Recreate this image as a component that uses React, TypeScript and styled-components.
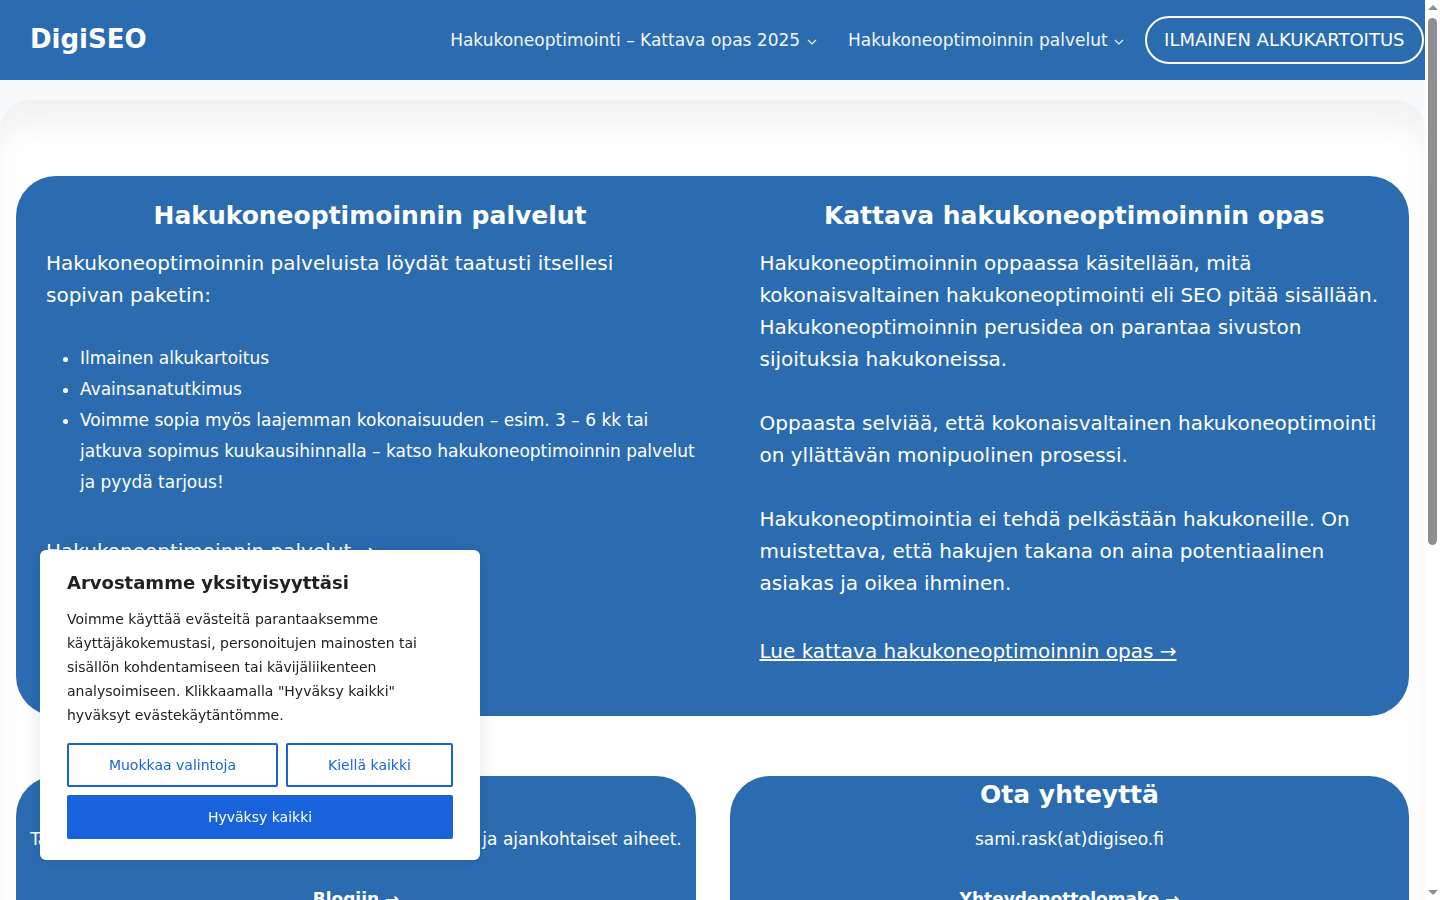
import React from 'react';
import styled, { createGlobalStyle } from 'styled-components';

const Global = createGlobalStyle`
  body {
    margin: 0 15px 0 0;
    background: #f7fafc;
    color: #fff;
    font-family: "DejaVu Sans", sans-serif;
  }
  a { color: inherit; }
`;

const Header = styled.header`
  height: 80px;
  background: #2b6cb0;
  display: flex;
  align-items: center;
  justify-content: space-between;
  padding-left: 30px;
`;

const Logo = styled.a`
  padding-bottom: 2px;
  font-size: 26px;
  font-weight: 700;
  color: #fff;
  text-decoration: none;
`;

const Nav = styled.nav`
  display: flex;
  align-items: center;
`;

const NavItem = styled.a<{ $gap: number }>`
  display: flex;
  align-items: center;
  gap: ${(p) => p.$gap}px;
  font-size: 17px;
  color: #f0f5fa;
  margin: 0 21px 0 10px;
`;

const Cta = styled.a`
  height: 48px;
  box-sizing: border-box;
  margin-right: 1px;
  padding: 0 17.5px 1px;
  display: flex;
  align-items: center;
  border: 2px solid #fff;
  border-radius: 24px;
  font-size: 18px;
  color: #fff;
`;

const Panel = styled.main`
  margin-top: 20px;
  padding: 76px 16px 40px;
  background: #fff;
  border-radius: 30px 30px 0 0;
  box-shadow: inset 0 30px 30px -5px rgba(0, 0, 0, 0.055);
`;

const BigCard = styled.section`
  height: 540px;
  box-sizing: border-box;
  background: #2b6cb0;
  border-radius: 40px;
  display: grid;
  grid-template-columns: 678px 1fr;
  column-gap: 35.5px;
  padding-top: 24px;
`;

const Column = styled.div<{ $right?: boolean }>`
  padding: ${(p) => (p.$right ? '0 20px 0 30px' : '0 0 0 30px')};
`;

const Title = styled.h2`
  margin: 0 0 15px;
  height: 32px;
  line-height: 32px;
  font-size: 25px;
  font-weight: 700;
  text-align: center;
  color: #fff;
`;

const Text = styled.p`
  margin: 0 0 32px;
  font-size: 20px;
  line-height: 32px;
  color: #fff;
`;

const List = styled.ul`
  margin: 0 -4px 33px 0;
  padding-left: 34px;
  font-size: 17px;
  line-height: 31px;
`;

const BigLink = styled.a`
  display: inline-block;
  margin-top: 4px;
  font-size: 20px;
  line-height: 32px;
  color: #fff;
  text-decoration: underline;
`;

const Row = styled.div`
  margin-top: 60px;
  display: grid;
  grid-template-columns: 680px 679px;
  gap: 34px;
`;

const SmallCard = styled.section`
  height: 190px;
  background: #2b6cb0;
  border-radius: 40px;
  text-align: center;
  color: #fff;
`;

const SmallTitle = styled.h3`
  margin: 0;
  padding-top: 2px;
  height: 32px;
  line-height: 34px;
  font-size: 25px;
  font-weight: 700;
`;

const SmallText = styled.p`
  margin: 14px 0 34px;
  line-height: 31px;
  font-size: 17px;
`;

const BoldLink = styled.a`
  font-size: 17px;
  font-weight: 700;
  color: #fff;
  text-decoration: underline;
`;

const Footer = styled.footer`
  padding: 24px 0 220px;
  text-align: center;
  font-size: 14px;
  color: #4a5568;
`;

const Cookie = styled.aside`
  position: fixed;
  left: 40px;
  bottom: 40px;
  width: 440px;
  height: 310px;
  box-sizing: border-box;
  padding: 22px 27px 0;
  background: #fff;
  border-radius: 6px;
  box-shadow: 0 0 18px rgba(0, 0, 0, 0.1);
  color: #212121;
`;

const CookieTitle = styled.div`
  font-size: 18px;
  font-weight: 700;
  line-height: 22px;
  margin-bottom: 13px;
`;

const CookieText = styled.p`
  margin: 0 0 16px;
  font-size: 14px;
  line-height: 24px;
  color: #212121;
`;

const Buttons = styled.div`
  display: grid;
  grid-template-columns: 211px 167px;
  gap: 8px;
`;

const CookieBtn = styled.button<{ $primary?: boolean; $wide?: boolean }>`
  height: 44px;
  border: 2px solid #1863dc;
  border-radius: 2px;
  background: ${(p) => (p.$primary ? '#1863dc' : '#fff')};
  color: ${(p) => (p.$primary ? '#fff' : '#1863dc')};
  font-family: inherit;
  font-size: 14px;
  grid-column: ${(p) => (p.$wide ? '1 / -1' : 'auto')};
`;

// the window's own scrollbar, as it stands in the picture
const ScrollRail = styled.div`
  position: fixed;
  top: 0;
  right: 0;
  bottom: 0;
  width: 15px;
  background: #fff;
  display: flex;
  flex-direction: column;
  align-items: center;
`;

const ScrollThumb = styled.div`
  width: 9px;
  height: 527px;
  margin-top: 8px;
  background: #8f8f8f;
  border-radius: 5px;
`;

const Arrow = styled.div<{ $down?: boolean }>`
  width: 0;
  height: 0;
  margin-top: ${(p) => (p.$down ? 'auto' : '5px')};
  margin-bottom: ${(p) => (p.$down ? '5px' : '0')};
  border-left: 5px solid transparent;
  border-right: 5px solid transparent;
  ${(p) => (p.$down ? 'border-top: 5px solid #8f8f8f;' : 'border-bottom: 5px solid #8f8f8f;')}
`;

const Chevron = () => (
  <svg width="10" height="6" viewBox="0 0 10 6" fill="none" stroke="currentColor" strokeWidth="1.2" style={{ marginTop: 4 }}>
    <path d="M1 1l4 4 4-4" />
  </svg>
);

export default function App() {
  return (
    <>
      <Global />
      <Header>
        <Logo>DigiSEO</Logo>
        <Nav>
          <NavItem $gap={7}>Hakukoneoptimointi – Kattava opas 2025 <Chevron /></NavItem>
          <NavItem $gap={6}>Hakukoneoptimoinnin palvelut <Chevron /></NavItem>
          <Cta>ILMAINEN ALKUKARTOITUS</Cta>
        </Nav>
      </Header>
      <Panel>
        <BigCard>
          <Column>
            <Title>Hakukoneoptimoinnin palvelut</Title>
            <Text>Hakukoneoptimoinnin palveluista löydät taatusti itsellesi<br />sopivan paketin:</Text>
            <List>
              <li>Ilmainen alkukartoitus</li>
              <li>Avainsanatutkimus</li>
              <li>Voimme sopia myös laajemman kokonaisuuden – esim. 3 – 6 kk tai jatkuva sopimus kuukausihinnalla – katso hakukoneoptimoinnin palvelut ja pyydä tarjous!</li>
            </List>
            <BigLink>Hakukoneoptimoinnin palvelut →</BigLink>
          </Column>
          <Column $right>
            <Title>Kattava hakukoneoptimoinnin opas</Title>
            <Text>Hakukoneoptimoinnin oppaassa käsitellään, mitä kokonaisvaltainen hakukoneoptimointi eli SEO pitää sisällään. Hakukoneoptimoinnin perusidea on parantaa sivuston sijoituksia hakukoneissa.</Text>
            <Text>Oppaasta selviää, että kokonaisvaltainen hakukoneoptimointi on yllättävän monipuolinen prosessi.</Text>
            <Text>Hakukoneoptimointia ei tehdä pelkästään hakukoneille. On muistettava, että hakujen takana on aina potentiaalinen asiakas ja oikea ihminen.</Text>
            <BigLink>Lue kattava hakukoneoptimoinnin opas →</BigLink>
          </Column>
        </BigCard>
        <Row>
          <SmallCard>
            <SmallTitle>Blogi</SmallTitle>
            <SmallText>Tarjolla blogeissa hakukoneoptimoinnin vinkit, uudet ja ajankohtaiset aiheet.</SmallText>
            <BoldLink>Blogiin →</BoldLink>
          </SmallCard>
          <SmallCard>
            <SmallTitle>Ota yhteyttä</SmallTitle>
            <SmallText>sami.rask(at)digiseo.fi</SmallText>
            <BoldLink>Yhteydenottolomake →</BoldLink>
          </SmallCard>
        </Row>
      </Panel>
      <Footer>© DigiSEO</Footer>
      <Cookie>
        <CookieTitle>Arvostamme yksityisyyttäsi</CookieTitle>
        <CookieText>Voimme käyttää evästeitä parantaaksemme käyttäjäkokemustasi, personoitujen mainosten tai sisällön kohdentamiseen tai kävijäliikenteen analysoimiseen. Klikkaamalla "Hyväksy kaikki" hyväksyt evästekäytäntömme.</CookieText>
        <Buttons>
          <CookieBtn>Muokkaa valintoja</CookieBtn>
          <CookieBtn>Kiellä kaikki</CookieBtn>
          <CookieBtn $primary $wide>Hyväksy kaikki</CookieBtn>
        </Buttons>
      </Cookie>
      <ScrollRail>
        <Arrow />
        <ScrollThumb />
        <Arrow $down />
      </ScrollRail>
    </>
  );
}
